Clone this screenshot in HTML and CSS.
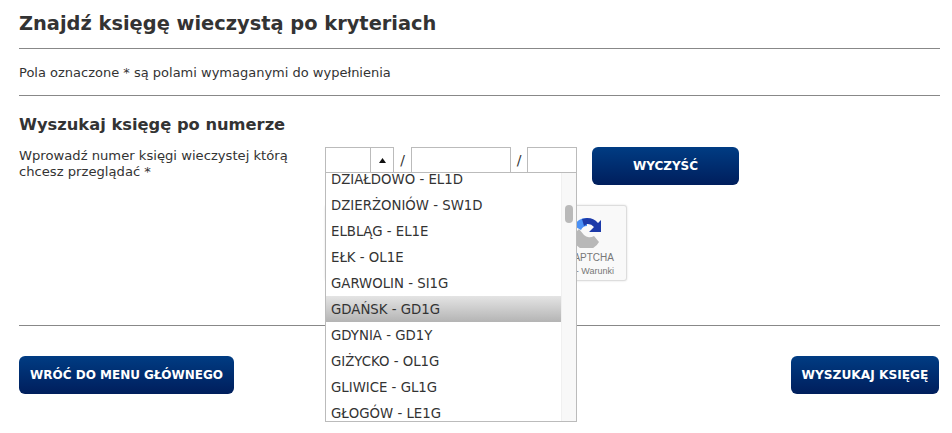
FILE: index.html
```html
<!DOCTYPE html>
<html lang="pl">
<head>
<meta charset="utf-8">
<title>Znajdź księgę wieczystą po kryteriach</title>
<link rel="stylesheet" href="styles.css">
</head>
<body>
<main class="page">
  <h1 class="title">Znajdź księgę wieczystą po kryteriach</h1>
  <p class="note">Pola oznaczone * są polami wymaganymi do wypełnienia</p>
  <section class="search">
    <h2 class="subtitle">Wyszukaj księgę po numerze</h2>
    <div class="row">
      <label class="label">Wprowadź numer księgi wieczystej którą chcesz przeglądać *</label>
      <div class="fields">
        <div class="combo">
          <span class="combo-value"></span>
          <span class="combo-arrow"><svg width="7" height="5" viewBox="0 0 7 5"><path d="M3.5 0 7 5H0z" fill="#111"/></svg></span>
        </div>
        <span class="slash">/</span>
        <span class="input input-mid"></span>
        <span class="slash slash-end">/</span>
        <span class="input input-end"></span>
        <ul class="dropdown">
          <li>DZIAŁDOWO - EL1D</li>
          <li>DZIERŻONIÓW - SW1D</li>
          <li>ELBLĄG - EL1E</li>
          <li>EŁK - OL1E</li>
          <li>GARWOLIN - SI1G</li>
          <li class="active">GDAŃSK - GD1G</li>
          <li>GDYNIA - GD1Y</li>
          <li>GIŻYCKO - OL1G</li>
          <li>GLIWICE - GL1G</li>
          <li>GŁOGÓW - LE1G</li>
        </ul>
        <div class="track"><span class="thumb"></span></div>
        <div class="captcha">
          <svg class="captcha-logo" width="32" height="32" viewBox="0 0 32 32">
            <path d="M16 2A14 14 0 0 0 3 10l7 4a7 7 0 0 1 6-4z" fill="#4a90f5"/>
            <path d="M16 2a14 14 0 0 1 11 5l3-3v12H18l5-5a8 8 0 0 0-7-3l-3 2-2-7z" fill="#1c3aa9"/>
            <path d="M2 16h3l3-3 5 6a8 8 0 0 0 10 1l5 6A14 14 0 0 1 2 16z" fill="#b8b8b8"/>
          </svg>
          <span class="captcha-name">reCAPTCHA</span>
          <span class="captcha-links">Prywatność - Warunki</span>
        </div>
      </div>
      <button class="btn btn-clear" type="button">WYCZYŚĆ</button>
    </div>
  </section>
  <footer class="actions">
    <button class="btn btn-back" type="button">WRÓĆ DO MENU GŁÓWNEGO</button>
    <button class="btn btn-search" type="button">WYSZUKAJ KSIĘGĘ</button>
  </footer>
</main>
</body>
</html>
```
FILE: styles.css
```css
* { box-sizing: border-box; }
html, body { margin: 0; padding: 0; background: #fff; }
body { font-family: "DejaVu Sans", Verdana, sans-serif; color: #333; overflow: hidden; height: 433px; }
.page { padding: 0 12px 0 19px; }
.title { margin: 0; height: 49px; padding-top: 12px; font-size: 19.4px; line-height: 24px; font-weight: 700; border-bottom: 1px solid #888; }
.note { margin: 0; height: 47px; padding-top: 15px; font-size: 13px; line-height: 18px; border-bottom: 1px solid #888; }
.search { height: 230px; border-bottom: 1px solid #888; padding-top: 18px; }
.subtitle { margin: 0 0 11px; font-size: 16.3px; line-height: 22px; font-weight: 700; }
.row { display: flex; align-items: flex-start; }
.label { width: 306px; font-size: 13.15px; line-height: 16px; padding: 1px 10px 0 0; }
.fields { position: relative; display: flex; align-items: flex-start; width: 252px; height: 26px; }
.combo { display: flex; width: 69px; height: 26px; border: 1px solid #bbb; border-bottom: 0; }
.combo-value { flex: 1; }
.combo-arrow { width: 23px; display: flex; align-items: center; justify-content: center; border-left: 1px solid #bbb; }
.slash { width: 17px; text-align: center; font-size: 14px; line-height: 26px; }
.slash-end { width: 16px; }
.input { height: 26px; border: 1px solid #bbb; border-bottom: 0; }
.input-mid { width: 100px; }
.input-end { width: 50px; }
.dropdown { position: absolute; z-index: 2; left: 0; top: 25px; width: 252px; height: 250px; margin: 0; padding: 0 15px 0 0; list-style: none; overflow: hidden; background: #fff; border: 1px solid #bbb; font-size: 13.3px; }
.dropdown li { height: 26px; line-height: 28px; padding-left: 5px; color: #333; white-space: nowrap; }
.dropdown li:first-child { margin-top: -7px; }
.dropdown .active { background: linear-gradient(#e4e4e4, #b4b4b4); }
.track { position: absolute; z-index: 3; left: 236px; top: 26px; width: 15px; height: 248px; background: #f8f8f8; border-left: 1px solid #f0f0f0; }
.thumb { display: block; width: 8px; height: 18px; margin: 32px 0 0 3px; border-radius: 4px; background: #b9b9b9; }
.captcha { position: absolute; z-index: 1; left: 0; top: 58px; width: 302px; height: 76px; border: 1px solid #ddd; border-radius: 3px; background: #f9f9f9; box-shadow: 0 0 2px rgba(0,0,0,.15); font-family: "Liberation Sans", Arial, sans-serif; color: #777; text-align: center; }
.captcha-logo { position: absolute; left: 245px; top: 10px; }
.captcha-name { position: absolute; right: 12px; top: 46px; font-size: 10px; line-height: 12px; }
.captcha-links { position: absolute; right: 12px; top: 60px; font-size: 9px; line-height: 11px; }
.btn { display: block; height: 38px; padding: 0; border: 0; border-radius: 6px; background: linear-gradient(#003c83, #001e5c); color: #fff; font-family: "DejaVu Sans", Verdana, sans-serif; font-size: 12px; font-weight: 700; text-align: center; }
.btn-clear { width: 147px; margin-left: 15px; }
.btn-back { width: 215px; }
.btn-search { width: 148px; font-size: 12.2px; }
.actions { display: flex; justify-content: space-between; padding: 30px 1px 0 0; }
```
